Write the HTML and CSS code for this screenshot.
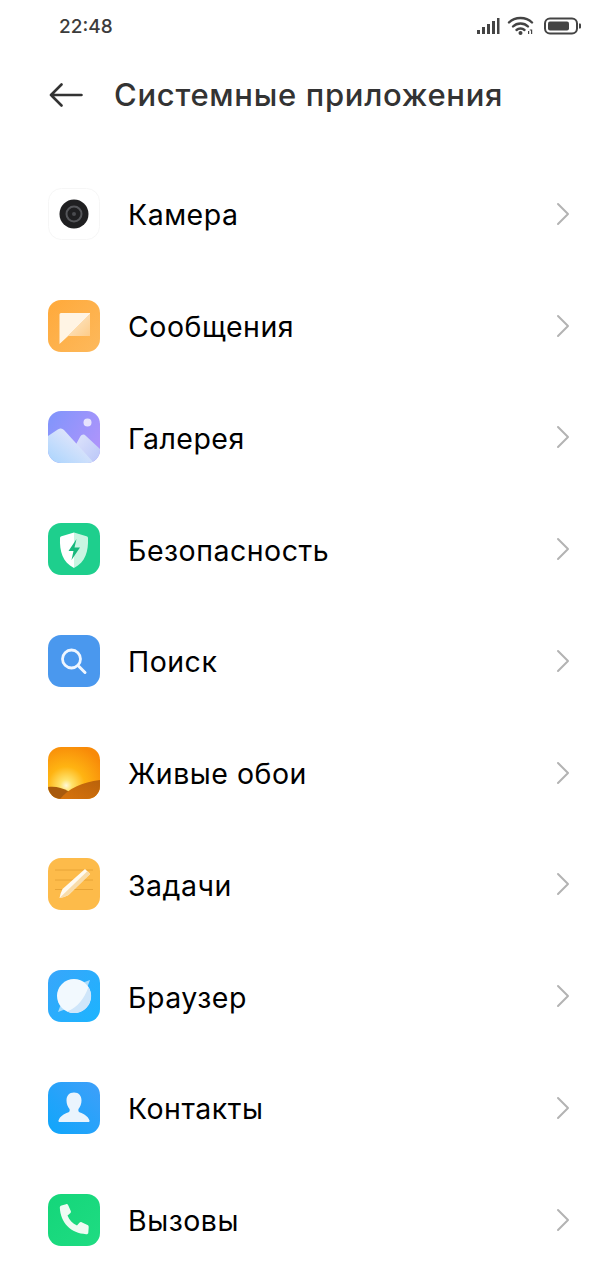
FILE: index.html
```html
<!DOCTYPE html>
<html lang="ru">
<head>
    <meta charset="UTF-8">
    <meta name="viewport" content="width=device-width, initial-scale=1.0">
    <title>Системные приложения</title>
    <link rel="stylesheet" href="styles.css">
</head>
<body>
    <svg class="sprite">
        <symbol id="chevron" viewBox="0 0 14 24"><path fill="none" stroke="#b3b3b3" stroke-width="2" stroke-linecap="round" stroke-linejoin="round" d="M2 2l10 10L2 22"/></symbol>
    </svg>

    <!-- Строка состояния -->
    <div class="status-bar">
        <span class="status-time">22:48</span>
        <div class="status-icons">
            <svg width="24" height="18" viewBox="0 0 24 18"><path fill="#444" d="M1 13h3v4H1zM6 10h3v7H6zM11 7h3v10h-3zM16 4h3v13h-3zM21 1h2.500v16H21z"/></svg>
            <svg width="30" height="20" viewBox="0 0 30 20"><g fill="none" stroke="#444" stroke-width="2.400" stroke-linecap="round"><path d="M2 6.500C8 .5 19 .5 25 6.500"/><path d="M6 10.500c4-4 11-4 15 0"/><path d="M9.500 14c2.200-2 5.800-2 8 0"/></g><circle cx="13.500" cy="17" r="2" fill="#444"/><path fill="#444" d="M21 15h1.200v3H21zM24 13.500h1.200v4.500H24zM22.800 13.500h1.200v1h-1.200z"/></svg>
            <svg width="38" height="18" viewBox="0 0 38 18"><rect x="1" y="1.500" width="32" height="15" rx="5" fill="none" stroke="#444" stroke-width="2"/><rect x="4" y="4.500" width="21" height="9" rx="2" fill="#444"/><path fill="#444" d="M35 6.500h1a1 1 0 0 1 1 1v3a1 1 0 0 1-1 1h-1z"/></svg>
        </div>
    </div>

    <!-- Заголовок -->
    <div class="top-bar">
        <svg class="back-arrow" width="34" height="24" viewBox="0 0 34 24"><path fill="none" stroke="#333" stroke-width="2.600" stroke-linecap="round" stroke-linejoin="round" d="M32.500 12H2M12.500 1.500L2 12l10.500 10.500"/></svg>
        <h1 class="page-title">Системные приложения</h1>
    </div>

    <!-- Список приложений -->
    <ul class="app-list">
        <li class="app-row">
            <svg class="app-icon" viewBox="0 0 52 52">
                <rect x=".5" y=".5" width="51" height="51" rx="13" fill="#fff" stroke="#f6f6f6"/>
                <circle cx="26" cy="26" r="14.500" fill="#1f1f21"/>
                <circle cx="26" cy="26" r="7.500" fill="none" stroke="#55565a" stroke-width="2"/>
                <circle cx="26" cy="26" r="2" fill="#4a4b4f"/>
            </svg>
            <span class="app-name">Камера</span>
            <svg class="chevron"><use href="#chevron"/></svg>
        </li>
        <li class="app-row">
            <svg class="app-icon" viewBox="0 0 52 52">
                <defs>
                    <linearGradient id="msgBg" x1="0" y1="0" x2="1" y2="1"><stop offset="0" stop-color="#ffa93a"/><stop offset="1" stop-color="#fdb95c"/></linearGradient>
                    <linearGradient id="msgFg" x1="0" y1="0" x2="1" y2="1"><stop offset=".5" stop-color="#fff4e4"/><stop offset=".5" stop-color="#fddcae"/><stop offset="1" stop-color="#fdc67c"/></linearGradient>
                </defs>
                <rect width="52" height="52" rx="13" fill="url(#msgBg)"/>
                <path fill="url(#msgFg)" d="M13 13h29v23H20.500L11.500 44V14.500a1.500 1.500 0 0 1 1.500-1.500z"/>
            </svg>
            <span class="app-name">Сообщения</span>
            <svg class="chevron"><use href="#chevron"/></svg>
        </li>
        <li class="app-row">
            <svg class="app-icon" viewBox="0 0 52 52">
                <defs>
                    <linearGradient id="galBg" x1="0" y1="0" x2="1" y2=".6"><stop offset="0" stop-color="#7f95fb"/><stop offset="1" stop-color="#ad94fb"/></linearGradient>
                    <linearGradient id="galA" x1="0" y1="1" x2="1" y2="0"><stop offset="0" stop-color="#a9d4fd"/><stop offset=".7" stop-color="#dfe5fb"/></linearGradient>
                    <linearGradient id="galB" x1="0" y1="0" x2="1" y2="1"><stop offset="0" stop-color="#dfe4fb"/><stop offset="1" stop-color="#b9c6f8"/></linearGradient>
                    <clipPath id="galClip"><rect width="52" height="52" rx="13"/></clipPath>
                </defs>
                <g clip-path="url(#galClip)">
                    <rect width="52" height="52" fill="url(#galBg)"/>
                    <circle cx="39.500" cy="11.500" r="4" fill="#e6e3fd"/>
                    <path fill="url(#galB)" d="M26 37l6-11c2-3 4-3 6-1l14 13v14H26z"/>
                    <path fill="url(#galA)" d="M0 25l9-6c3-2 5-2 7 0l30 33H0z"/>
                </g>
            </svg>
            <span class="app-name">Галерея</span>
            <svg class="chevron"><use href="#chevron"/></svg>
        </li>
        <li class="app-row">
            <svg class="app-icon" viewBox="0 0 52 52">
                <defs>
                    <linearGradient id="secFg" x1="0" y1="0" x2="1" y2="0"><stop offset=".5" stop-color="#fff"/><stop offset=".5" stop-color="#c9f5e2"/></linearGradient>
                </defs>
                <rect width="52" height="52" rx="13" fill="#1ecf8d"/>
                <path fill="url(#secFg)" d="M26 9.500l12.500 3.800c1 .3 1.500 1 1.500 2 .5 13-2.500 24-14 29.700-11.500-5.700-14.500-16.700-14-29.700 0-1 .5-1.700 1.500-2z"/>
                <path fill="#17b87c" d="M28.500 16L20.500 28h5l-2 9L32 24.500h-5.500z"/>
            </svg>
            <span class="app-name">Безопасность</span>
            <svg class="chevron"><use href="#chevron"/></svg>
        </li>
        <li class="app-row">
            <svg class="app-icon" viewBox="0 0 52 52">
                <rect width="52" height="52" rx="13" fill="#4a98ee"/>
                <circle cx="23.500" cy="24" r="9" fill="none" stroke="#eef6ff" stroke-width="2.800"/>
                <path fill="none" stroke="#eef6ff" stroke-width="3" stroke-linecap="round" d="M31 31.500l6 6"/>
            </svg>
            <span class="app-name">Поиск</span>
            <svg class="chevron"><use href="#chevron"/></svg>
        </li>
        <li class="app-row">
            <svg class="app-icon" viewBox="0 0 52 52">
                <defs>
                    <radialGradient id="sunBg" cx=".35" cy=".74" r=".8"><stop offset="0" stop-color="#fff8d8"/><stop offset=".14" stop-color="#ffe36c"/><stop offset=".45" stop-color="#ffb412"/><stop offset="1" stop-color="#f88a08"/></radialGradient>
                    <linearGradient id="sunHill" x1="0" y1="1" x2="1" y2="0"><stop offset="0" stop-color="#d8740c"/><stop offset="1" stop-color="#b9620b"/></linearGradient>
                    <clipPath id="sunClip"><rect width="52" height="52" rx="13"/></clipPath>
                </defs>
                <g clip-path="url(#sunClip)">
                    <rect width="52" height="52" fill="url(#sunBg)"/>
                    <path fill="#a85a0c" d="M0 40c8-1 14 1 20 4l12 8H0z"/>
                    <path fill="url(#sunHill)" d="M12 52c8-10 22-17 40-19v19z"/>
                </g>
            </svg>
            <span class="app-name">Живые обои</span>
            <svg class="chevron"><use href="#chevron"/></svg>
        </li>
        <li class="app-row">
            <svg class="app-icon" viewBox="0 0 52 52">
                <rect width="52" height="52" rx="13" fill="#fdbb4a"/>
                <path fill="none" stroke="#e8a436" d="M7 12h38M7 22h38M7 31.500h38"/>
                <path fill="#fffaf0" d="M37 11l5 5-21.500 21c-3 1.500-6 2.500-9 3 .5-3 1.500-6 3-9z"/>
                <path fill="#f8dcaa" d="M42 16L20.500 37c-3 1.500-6 2.500-9 3l28-27z"/>
            </svg>
            <span class="app-name">Задачи</span>
            <svg class="chevron"><use href="#chevron"/></svg>
        </li>
        <li class="app-row">
            <svg class="app-icon" viewBox="0 0 52 52">
                <defs>
                    <linearGradient id="brwBg" x1="0" y1="0" x2="1" y2="1"><stop offset="0" stop-color="#38a6fb"/><stop offset="1" stop-color="#1cb4fe"/></linearGradient>
                </defs>
                <rect width="52" height="52" rx="13" fill="url(#brwBg)"/>
                <path fill="#a9dcfd" d="M10 42l3-8 5 5zM42 10l-8 3 5 5z"/>
                <circle cx="26" cy="26" r="17" fill="#f2f9fe"/>
                <path fill="#cfe6fa" d="M40.500 17A17 17 0 0 1 19 41.500C30 37 36 29 40.500 17z"/>
            </svg>
            <span class="app-name">Браузер</span>
            <svg class="chevron"><use href="#chevron"/></svg>
        </li>
        <li class="app-row">
            <svg class="app-icon" viewBox="0 0 52 52">
                <defs>
                    <linearGradient id="conBg" x1="1" y1="0" x2="0" y2="1"><stop offset="0" stop-color="#3f9ff9"/><stop offset="1" stop-color="#0fa6fb"/></linearGradient>
                </defs>
                <rect width="52" height="52" rx="13" fill="url(#conBg)"/>
                <path fill="#eaf4fd" d="M26 10.500c5 0 7.500 3.500 7.500 8 0 3.500-1.300 6.500-3 8.500-.5 1.500 0 3 1.500 3.500 4 1.500 8 3.500 9.500 8 .2.800-.2 1.500-1 1.500H11.500c-.8 0-1.200-.7-1-1.500 1.500-4.500 5.500-6.500 9.500-8 1.500-.5 2-2 1.500-3.500-1.700-2-3-5-3-8.500 0-4.500 2.500-8 7.500-8z"/>
            </svg>
            <span class="app-name">Контакты</span>
            <svg class="chevron"><use href="#chevron"/></svg>
        </li>
        <li class="app-row">
            <svg class="app-icon" viewBox="0 0 52 52">
                <defs>
                    <linearGradient id="callBg" x1="0" y1="0" x2="1" y2="1"><stop offset="0" stop-color="#14d67a"/><stop offset="1" stop-color="#1fdc82"/></linearGradient>
                </defs>
                <rect width="52" height="52" rx="13" fill="url(#callBg)"/>
                <path fill="#eefbf3" d="M13.500 11.500l4.500-1.300c1-.3 1.800.2 2.200 1l2.600 5.800c.3.800.1 1.600-.6 2.200l-2.700 2.300c1.800 4.500 5 8 9.500 10l2.400-2.800c.6-.6 1.400-.8 2.200-.5l5.900 2.900c.9.400 1.300 1.200 1.200 2.200l-.4 5.400c-.1 1-.9 1.600-2.100 1.500C23 39.500 12.500 29 11.800 13.600c0-1 .7-1.800 1.700-2.100z"/>
            </svg>
            <span class="app-name">Вызовы</span>
            <svg class="chevron"><use href="#chevron"/></svg>
        </li>
    </ul>
</body>
</html>
```

FILE: styles.css
```css
html, body {
    margin: 0;
    padding: 0;
}

body {
    width: 615px;
    height: 1280px;
    overflow: hidden;
    background: #fff;
    font-family: "Inter", "Noto Sans", sans-serif;
}

.sprite {
    display: none;
}

/* Строка состояния */
.status-bar {
    height: 52px;
    padding: 0 33px 0 59px;
    display: flex;
    align-items: center;
    justify-content: space-between;
}

.status-time {
    font-size: 19px;
    font-weight: 500;
    color: #3c3c3c;
}

.status-icons {
    display: flex;
    align-items: center;
    gap: 7px;
}

/* Заголовок */
.top-bar {
    height: 86px;
    padding-left: 49px;
    display: flex;
    align-items: center;
}

.back-arrow {
    flex-shrink: 0;
}

.page-title {
    margin: 0 0 2px 31px;
    font-size: 31px;
    font-weight: 500;
    letter-spacing: 0.7px;
    color: #333;
    white-space: nowrap;
}

/* Список приложений */
.app-list {
    list-style: none;
    margin: 20px 0 0;
    padding: 0 45px 0 48px;
}

.app-row {
    height: 111.75px;
    display: flex;
    align-items: center;
}

.app-icon {
    width: 52px;
    height: 52px;
    flex-shrink: 0;
}

.app-name {
    margin-left: 28px;
    padding-top: 2px;
    font-size: 28.5px;
    letter-spacing: 0.5px;
    color: #000;
    flex: 1;
}

.chevron {
    width: 14px;
    height: 24px;
    flex-shrink: 0;
}
```
